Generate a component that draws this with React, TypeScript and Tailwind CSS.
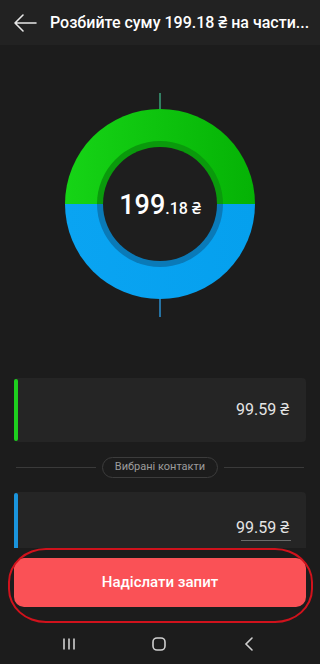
import React from "react";

function Donut() {
  const cx = 100;
  const cy = 111;
  const R = 95;
  const r1 = 63;
  const r2 = 57;
  return (
    <svg width="200" height="224" viewBox="0 0 200 224">
      <defs>
        <linearGradient id="g" x1="0" y1="0" x2="1" y2="0">
          <stop offset="0" stopColor="#16d416" />
          <stop offset="1" stopColor="#05b205" />
        </linearGradient>
        <linearGradient id="b" x1="0" y1="0" x2="1" y2="0">
          <stop offset="0" stopColor="#0aa4f2" />
          <stop offset="1" stopColor="#05a0ee" />
        </linearGradient>
      </defs>
      <line x1={cx} y1="0" x2={cx} y2="16" stroke="#3aa07a" strokeWidth="1.5" />
      <line x1={cx} y1="206" x2={cx} y2="224" stroke="#2a8fcf" strokeWidth="1.5" />
      <path d={`M ${cx - R} ${cy} A ${R} ${R} 0 0 1 ${cx + R} ${cy} Z`} fill="url(#g)" />
      <path d={`M ${cx - R} ${cy} A ${R} ${R} 0 0 0 ${cx + R} ${cy} Z`} fill="url(#b)" />
      <path d={`M ${cx - r1} ${cy} A ${r1} ${r1} 0 0 1 ${cx + r1} ${cy} Z`} fill="#0a9a0c" />
      <path d={`M ${cx - r1} ${cy} A ${r1} ${r1} 0 0 0 ${cx + r1} ${cy} Z`} fill="#0a7ab8" />
      <circle cx={cx} cy={cy} r={r2} fill="#1e1e1e" />
    </svg>
  );
}

export default function App() {
  const font = { fontFamily: "Roboto, 'Noto Sans', 'DejaVu Sans', sans-serif" };
  return (
    <div className="w-[320px] h-[664px] bg-[#1c1c1c] flex flex-col overflow-hidden relative" style={font}>
      {/* Header */}
      <div className="h-[45px] bg-[#222222] flex items-center shrink-0">
        <div className="w-[50px] pl-[13px] flex items-center shrink-0">
          <svg width="24" height="20" viewBox="0 0 24 20" fill="none">
            <path d="M23 10H2M10 2L2 10L10 18" stroke="#e8e8e8" strokeWidth="1.6" strokeLinecap="round" strokeLinejoin="round" />
          </svg>
        </div>
        <div className="text-[16px] font-medium text-white whitespace-nowrap">
          Розбийте суму 199.18 ₴ на части...
        </div>
      </div>

      {/* Donut */}
      <div className="pt-[48px] flex justify-center shrink-0 relative">
        <Donut />
        <div className="absolute left-0 right-0 top-[48px] h-[224px] flex items-center justify-center">
          <div className="flex items-baseline text-white">
            <span className="text-[27px] font-medium leading-none">199</span>
            <span className="text-[16px] font-medium leading-none">.18 ₴</span>
          </div>
        </div>
      </div>

      {/* Card 1 */}
      <div className="mt-[61px] mx-[14px] h-[64px] bg-[#252525] rounded-[4px] flex items-center relative shrink-0">
        <div className="absolute left-0 top-[1px] bottom-[1px] w-[4px] rounded-full bg-[#1ecf1e]" />
        <div className="ml-auto pr-[17px] text-[16px] text-[#e4e4e4]">99.59 ₴</div>
      </div>

      {/* Divider */}
      <div className="mt-[15px] mx-[16px] h-[21px] flex items-center gap-[6px] shrink-0">
        <div className="flex-1 h-px bg-[#3a3a3a]" />
        <div className="h-[21px] px-[12px] rounded-full border border-[#3c3c3c] text-[11px] text-[#9c9c9c] flex items-center">
          Вибрані контакти
        </div>
        <div className="flex-1 h-px bg-[#3a3a3a]" />
      </div>

      {/* Card 2 */}
      <div className="mt-[14px] mx-[14px] h-[56px] bg-[#252525] rounded-t-[4px] relative shrink-0">
        <div className="absolute left-0 top-[1px] bottom-0 w-[4px] rounded-t-full bg-[#1a94dc]" />
        <div className="absolute right-[17px] top-[26px] flex flex-col items-end">
          <div className="text-[16px] text-[#e4e4e4] leading-[20px]">99.59 ₴</div>
          <div className="w-[50px] h-px bg-[#6a6a6a] mt-[2px] -mr-[2px]" />
        </div>
      </div>

      {/* Button section */}
      <div className="pt-[10px] pb-[17px] px-[14px] shrink-0 relative">
        <button className="w-full h-[49px] rounded-[10px] bg-[#fa5156] text-white text-[15px] font-medium">
          Надіслати запит
        </button>
        <div className="absolute left-[8px] right-[7px] top-0 bottom-[1px] rounded-[38px/34px] border-2 border-[#d0121c] pointer-events-none" />
      </div>

      {/* Nav */}
      <div className="h-[40px] flex items-center pl-[49px] gap-[50px] shrink-0">
        <div className="w-[40px] flex justify-center">
          <svg width="14" height="14" viewBox="0 0 14 14">
            <path d="M2 1.5V12.5M7 1.5V12.5M12 1.5V12.5" stroke="#cfcfcf" strokeWidth="1.6" />
          </svg>
        </div>
        <div className="w-[40px] flex justify-center">
          <svg width="16" height="16" viewBox="0 0 16 16">
            <rect x="2" y="2" width="12" height="12" rx="4" stroke="#cfcfcf" strokeWidth="1.6" fill="none" />
          </svg>
        </div>
        <div className="w-[40px] flex justify-center">
          <svg width="14" height="16" viewBox="0 0 14 16">
            <path d="M10 2L4 8L10 14" stroke="#cfcfcf" strokeWidth="1.6" fill="none" strokeLinecap="round" />
          </svg>
        </div>
      </div>
    </div>
  );
}
